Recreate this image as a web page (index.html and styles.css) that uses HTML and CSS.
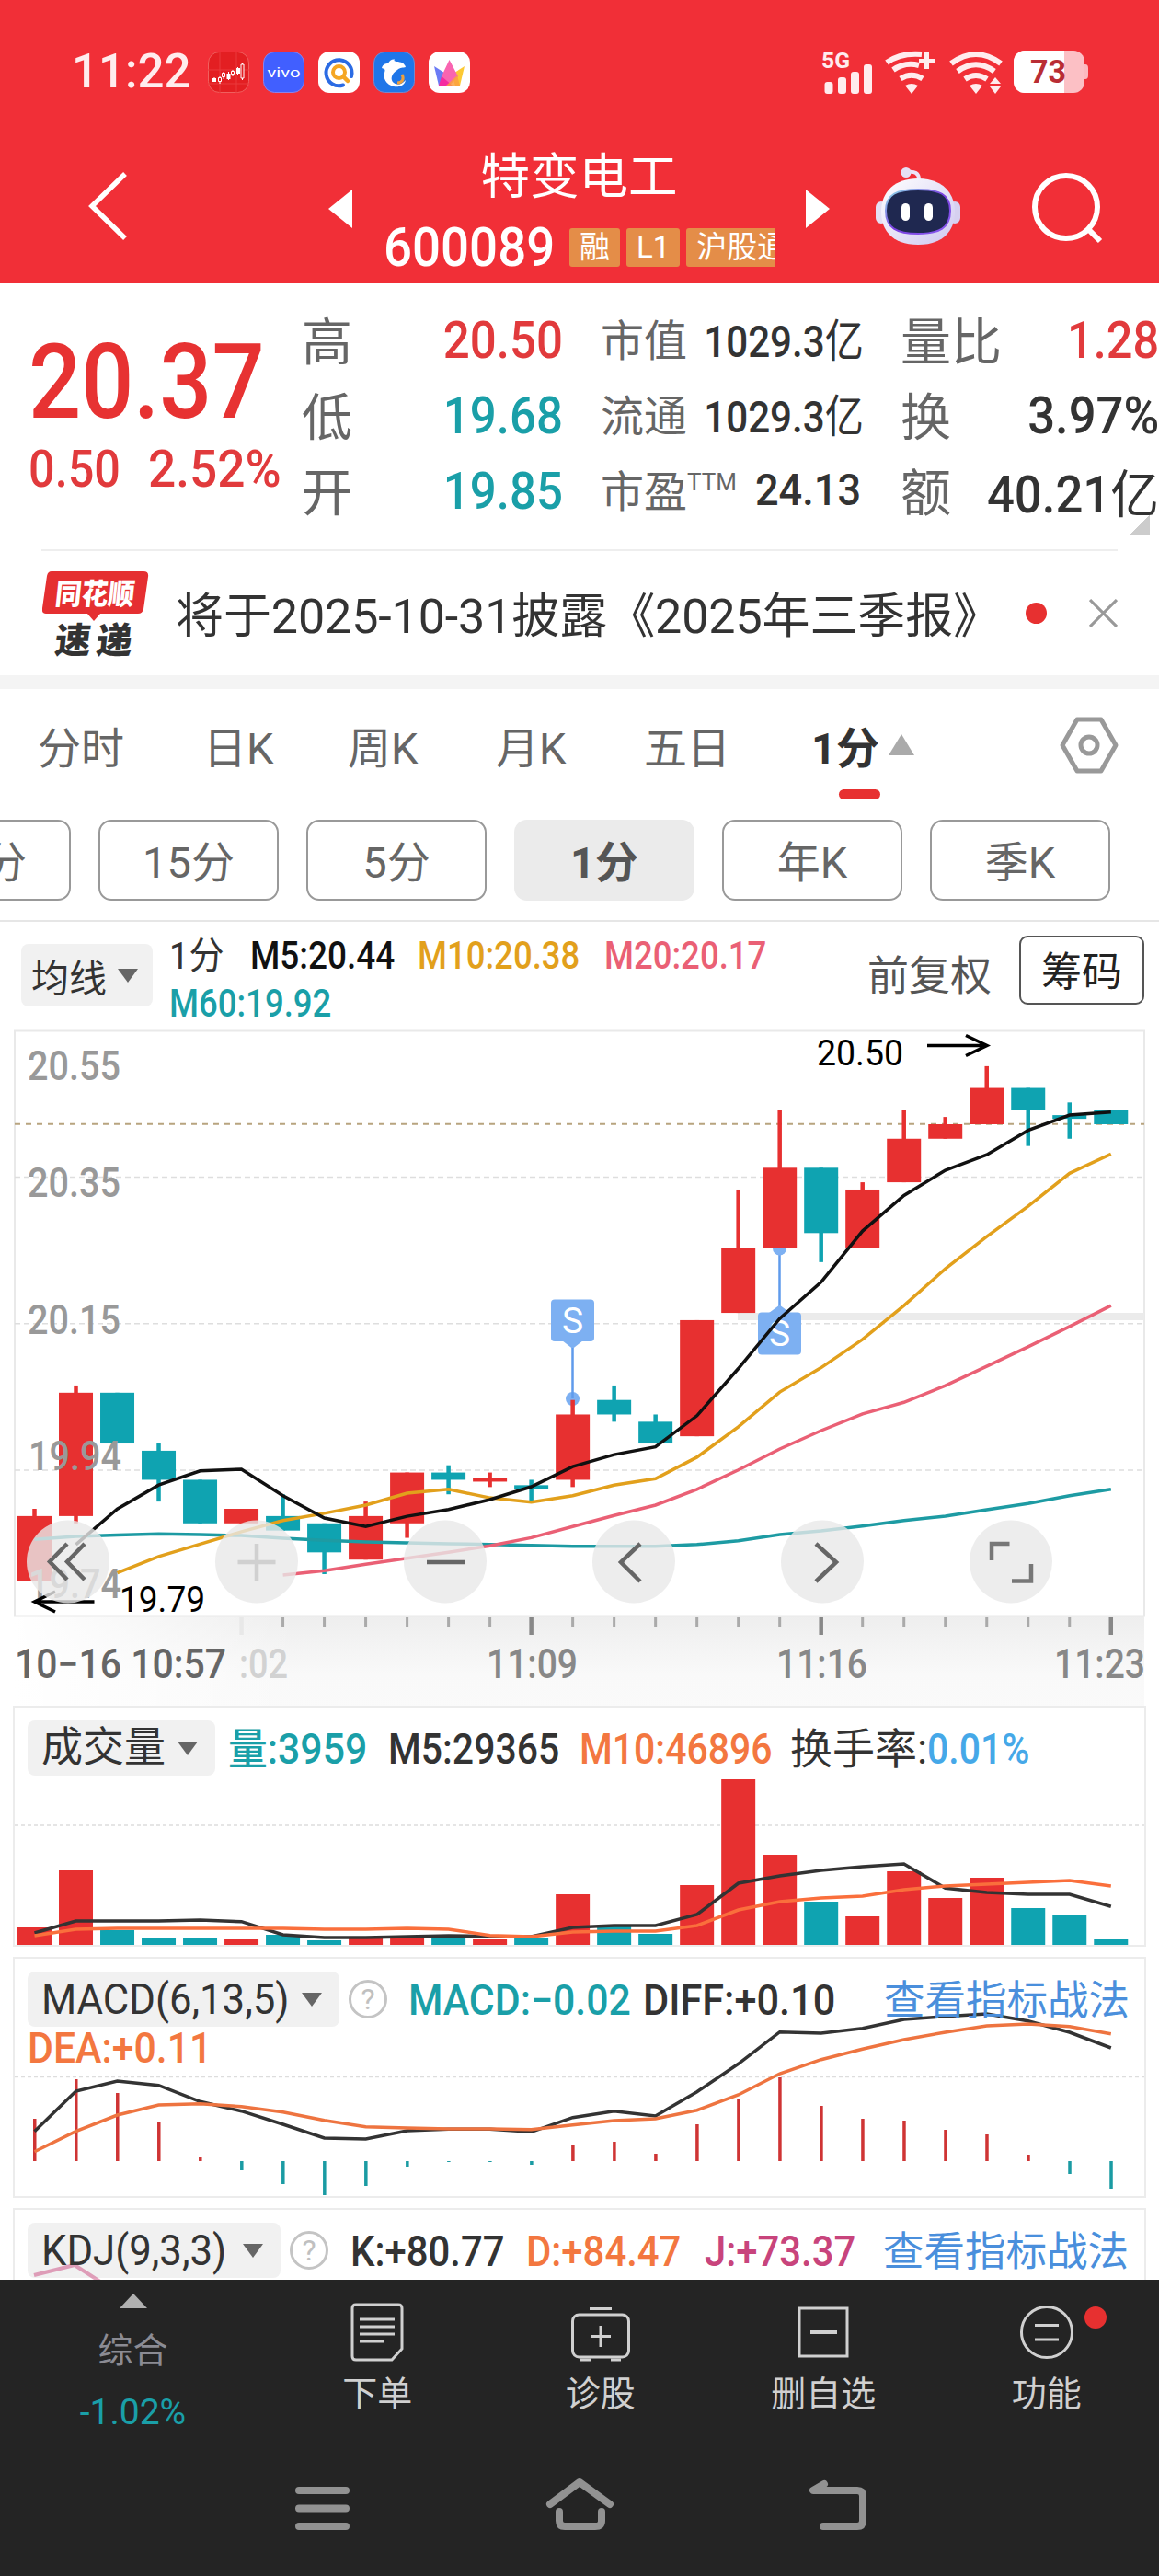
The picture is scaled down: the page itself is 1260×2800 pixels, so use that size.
FILE: index.html
```
<!DOCTYPE html>
<html lang="zh-CN">
<head>
    <meta charset="UTF-8">
    <meta name="viewport" content="width=device-width, initial-scale=1.0">
    <title>特变电工 600089</title>
    <link rel="stylesheet" href="styles.css">
</head>
<body>

<header class="top">
    <div class="status">
        <span class="clock">11:22</span>
        <div class="apps">
            <svg class="app" viewBox="0 0 45 45"><rect x=".5" y=".5" width="44" height="44" rx="12" fill="#e31f22" stroke="#f0605f"/><path d="M13 0V45M31 0V45M0 20H45M0 35H45" stroke="#ea3a3c" fill="none"/><path d="M7 28V33M13 27V35M17 22V30M22.500 22V31M27 20V27M32.500 17V25M37.500 12V31" stroke="#fff" stroke-width="1"/><path d="M5 29h4v4h-4zM20.500 24h4v6h-4zM31 18h4v6h-4z" fill="#fff"/><path d="M11.500 28.500h3v4h-3zM15.500 23.500h3v4h-3zM25.500 21.500h3v3h-3zM36 14h3v15h-3z" fill="#e31f22" stroke="#fff"/></svg>
            <svg class="app" viewBox="0 0 45 45"><rect x=".5" y=".5" width="44" height="44" rx="12" fill="#415fff" stroke="#8d82e8"/><text x="4.500" y="28" font-size="15" textLength="36" lengthAdjust="spacingAndGlyphs" fill="#fff">vivo</text></svg>
            <svg class="app" viewBox="0 0 45 45"><rect width="45" height="45" rx="12" fill="#fff"/><path d="M27 36.500A14 14 0 1 1 36 27" fill="none" stroke="#2b6be4" stroke-width="4" stroke-linecap="round"/><circle cx="22.500" cy="22.500" r="6.500" fill="none" stroke="#f5a623" stroke-width="4"/><path d="M27 27L32 32" stroke="#f5a623" stroke-width="4.500" stroke-linecap="round"/></svg>
            <svg class="app" viewBox="0 0 45 45"><rect x=".5" y=".5" width="44" height="44" rx="12" fill="#1f76e8" stroke="#7d86c8"/><path d="M9 18C10 14 13 13 16 13C17 10 20 8 23 8.500C22 10 22.500 10.500 25 11C30 11 34 13 35 17C32 18 29 17 26 20C19 24 18 31 22 34C26 37 31 36 35 31C34 37 28 39 22 38C14 36 10 29 12 23C13 20 13 19 9 18Z" fill="#fff"/><path d="M31 25C34 30 31 34 26 34" stroke="#f0a03c" stroke-width="3" fill="none"/></svg>
            <svg class="app" viewBox="0 0 45 45"><rect width="45" height="45" rx="12" fill="#fff"/><path d="M6 16L20 25L16 37H11Z" fill="#6b7bf5"/><path d="M39 16L25 25L29 37H34Z" fill="#fcc934"/><path d="M22.500 9L32 27L22.500 37L14 27Z" fill="#f964b0"/><path d="M14 27L26 37H11Z" fill="#f52ba0"/><path d="M31 26L34 37H19Z" fill="#fba040" opacity=".85"/></svg>
        </div>
        <svg class="signals" viewBox="890 50 300 56" fill="#ffecee">
            <text x="893" y="74" font-size="24" font-weight="700" textLength="31" lengthAdjust="spacingAndGlyphs">5G</text>
            <rect x="896.500" y="89" width="9" height="13" rx="3"/><rect x="911" y="84" width="9" height="18" rx="3"/><rect x="925" y="78" width="9" height="24" rx="3"/><rect x="939" y="70" width="9" height="32" rx="3"/>
            <g fill="none" stroke="#ffecee" stroke-width="6">
                <path d="M964 68Q979 57 1002 59M971 76Q984 67 999 71M979 85.500Q991 78 1003 85.500"/>
                <path d="M1034 69Q1061 49 1088 69M1041 77.500Q1061 63 1081 77.500M1049 86Q1061 78 1073 86"/>
            </g>
            <path d="M984 93Q991 89 998 93L991 102ZM1054 93Q1061 89 1068 93L1061 102ZM1076 91h12l-6-7zM1076 94h12l-6 8zM1005 57h5v7h7v4h-7v7h-5v-7h-6v-4h6z"/>
            <path d="M1178 70h2q3 0 3 4v8q0 4-3 4h-2z" fill="#fcb9bf"/>
            <rect x="1102" y="55" width="77" height="46" rx="12" fill="#fcc0c5"/>
            <path d="M1157 55h-43a12 12 0 0 0-12 12v22a12 12 0 0 0 12 12h43z" fill="#fff"/>
            <text x="1120" y="90" font-size="35" font-weight="700" fill="#b92d34" textLength="39" lengthAdjust="spacingAndGlyphs">73</text>
        </svg>
    </div>

    <div class="titlebar">
        <svg class="back" viewBox="0 0 44 76"><path d="M40 3L4 38L40 73" fill="none" stroke="#fff" stroke-width="5.500"/></svg>
        <svg class="prev" viewBox="0 0 26 42"><path d="M26 0V42L0 21Z" fill="#fff"/></svg>
        <div class="stock">
            <h1>特变电工</h1>
            <div class="code-row">
                <span class="code">600089</span>
                <span class="tag">融</span>
                <span class="tag">L1</span>
                <span class="tag tag-cut">沪股通</span>
            </div>
        </div>
        <svg class="next" viewBox="0 0 26 42"><path d="M0 0V42L26 21Z" fill="#fff"/></svg>
        <svg class="robot" viewBox="0 0 94 86">
            <defs>
                <linearGradient id="shell" x1="0" y1="0" x2="1" y2="1"><stop offset="0" stop-color="#fff"/><stop offset="1" stop-color="#cfc8f0"/></linearGradient>
                <linearGradient id="rim" x1="0" y1="0" x2="1" y2="1"><stop offset="0" stop-color="#8fe4e8"/><stop offset=".5" stop-color="#7a3fe0"/><stop offset="1" stop-color="#8a5cf0"/></linearGradient>
            </defs>
            <path d="M35 6Q48 4 48 14" fill="none" stroke="#ece4f8" stroke-width="4"/>
            <circle cx="34" cy="6.500" r="5.500" fill="#e6e0f4"/>
            <rect x="1" y="38" width="12" height="24" rx="6" fill="#e4e0f4"/><rect x="81" y="38" width="12" height="24" rx="6" fill="#d6d0f0"/>
            <path d="M47 13C72 13 87 27 87 49C87 72 72 85 47 85C22 85 7 72 7 49C7 27 22 13 47 13Z" fill="url(#shell)"/>
            <path d="M47 25C70 25 82 30 82 48C82 67 70 73 47 73C24 73 12 67 12 48C12 30 24 25 47 25Z" fill="#1f2850" stroke="url(#rim)" stroke-width="2"/>
            <rect x="29" y="40" width="9" height="19" rx="4.500" fill="#fff"/><rect x="54" y="40" width="9" height="19" rx="4.500" fill="#fff"/>
        </svg>
        <svg class="search" viewBox="0 0 78 78"><circle cx="37" cy="37" r="34" fill="none" stroke="#fff" stroke-width="6"/><path d="M61 61L74 74" stroke="#fff" stroke-width="6"/></svg>
    </div>
</header>

<section class="quote">
    <div class="price">
        <div class="last">20.37</div>
        <div class="change"><span>0.50</span><span class="pct">2.52%</span></div>
    </div>
    <dl class="col col-a">
        <div><dt>高</dt><dd class="up">20.50</dd></div>
        <div><dt>低</dt><dd class="down">19.68</dd></div>
        <div><dt>开</dt><dd class="down">19.85</dd></div>
    </dl>
    <dl class="col col-b">
        <div><dt>市值</dt><dd>1029.3<i>亿</i></dd></div>
        <div><dt>流通</dt><dd>1029.3<i>亿</i></dd></div>
        <div><dt>市盈<sup>TTM</sup></dt><dd class="pe">24.13</dd></div>
    </dl>
    <dl class="col col-c">
        <div><dt>量比</dt><dd class="ratio">1.28</dd></div>
        <div><dt>换</dt><dd>3.97%</dd></div>
        <div><dt>额</dt><dd>40.21<i>亿</i></dd></div>
    </dl>
    <i class="corner"></i>
</section>

<section class="news">
    <svg class="news-logo" viewBox="0 0 116 94">
        <path d="M10 1H110Q116 1 115 7L110 42Q109 47 104 47H63L56 55L49 47H4Q-1 47 0 41L5 6Q6 1 10 1Z" fill="#e52f31"/>
        <g transform="skewX(-6)" font-weight="900">
            <text x="17" y="37" font-size="32" fill="#fff" textLength="86" lengthAdjust="spacingAndGlyphs">同花顺</text>
            <text x="22" y="90" font-size="39" fill="#333" textLength="84">速递</text>
        </g>
    </svg>
    <p>将于2025-10-31披露《2025年三季报》</p>
    <i class="dot"></i>
    <svg class="close" viewBox="0 0 30 30"><path d="M1 1L29 29M29 1L1 29" stroke="#999" stroke-width="3"/></svg>
</section>

<nav class="tabs">
    <span>分时</span><span>日K</span><span>周K</span><span>月K</span><span>五日</span>
    <span class="active">1分<svg viewBox="0 0 28 23"><path d="M14 0L28 23H0Z" fill="#aaa"/></svg></span>
    <svg class="settings" viewBox="0 0 64 62"><path d="M19 3H45L61 31L45 59H19L3 31Z" fill="none" stroke="#999" stroke-width="5" stroke-linejoin="round"/><circle cx="32" cy="31" r="9" fill="none" stroke="#999" stroke-width="5"/></svg>
</nav>

<div class="periods">
    <span>30分</span><span>15分</span><span>5分</span><span class="active">1分</span><span>年K</span><span>季K</span>
</div>

<div class="ma-row">
    <span class="select">均线<i class="caret"></i></span>
    <div class="ma-values">
        <span>1分</span><span class="black">M5:20.44</span><span class="gold">M10:20.38</span><span class="pink">M20:20.17</span><span class="teal">M60:19.92</span>
    </div>
    <span class="adjust">前复权</span>
    <span class="chips">筹码</span>
</div>

<svg class="kline" id="kline" viewBox="0 0 1260 746"></svg>

<section class="panel volume">
    <svg id="volume" viewBox="0 0 1228 258"></svg>
    <div class="legend">
        <span class="select">成交量<i class="caret"></i></span>
        <span class="val teal v1">量:3959</span><span class="val v2">M5:29365</span><span class="val orange v3">M10:46896</span><span class="v4">换手率:<b>0.01%</b></span>
    </div>
</section>

<section class="panel macd">
    <svg id="macd" viewBox="0 0 1228 258"></svg>
    <div class="legend">
        <span class="select"><span class="name">MACD(6,13,5)</span><i class="caret"></i></span>
        <i class="help">?</i>
        <span class="val teal m1">MACD:−0.02</span><span class="val m2">DIFF:+0.10</span>
        <a>查看指标战法</a>
        <span class="val orange m3">DEA:+0.11</span>
    </div>
</section>

<section class="panel kdj">
    <div class="legend">
        <span class="select"><span class="name">KDJ(9,3,3)</span><i class="caret"></i></span>
        <i class="help">?</i>
        <span class="val k1">K:+80.77</span><span class="val orange k2">D:+84.47</span><span class="val magenta k3">J:+73.37</span>
        <a>查看指标战法</a>
    </div>
    <svg viewBox="0 0 1228 78"><path d="M21 71L65 60L96 80" fill="none" stroke="#cc4a80" stroke-width="4" opacity=".5"/></svg>
</section>

<footer>
    <div class="toolbar">
        <div class="index"><i></i><span>综合</span><b>-1.02%</b></div>
        <div class="tool">
            <svg viewBox="0 0 64 64"><path d="M9 2H55Q59 2 59 6V50L48 62H9Q5 62 5 58V6Q5 2 9 2Z"/><path d="M13 18H51M13 26H51M13 34H51M13 42H39"/></svg>
            <span>下单</span>
        </div>
        <div class="tool">
            <svg viewBox="0 0 64 64"><rect x="1.500" y="13" width="61" height="46" rx="7"/><path d="M20 6.500H44M10 62H21M43 62H54M32 25V48M21 36.500H43"/></svg>
            <span>诊股</span>
        </div>
        <div class="tool">
            <svg viewBox="0 0 64 64"><rect x="6" y="6" width="52" height="52"/><path d="M18 32H47" stroke-width="4"/></svg>
            <span>删自选</span>
        </div>
        <div class="tool">
            <svg viewBox="0 0 64 64"><circle cx="32" cy="32" r="27.500"/><path d="M19 24.500H45M19 40H45"/></svg>
            <span>功能</span>
            <i class="badge"></i>
        </div>
    </div>
    <svg class="sysnav" viewBox="0 0 1260 80" fill="none" stroke="#929292" stroke-width="8" stroke-linecap="round" stroke-linejoin="round">
        <path d="M325 21H376M325 40.500H376M325 60H376"/>
        <path d="M598 36L630 12L663 36M608 44V54Q608 60 614 60H647Q654 60 654 54V44" />
        <path d="M896 14L884 21H932Q938 21 938 27V54Q938 60 932 60H895"/>
    </svg>
</footer>

<script>
    const RED = '#e73030', GREEN = '#0fa3b1', STEP = 45.01;

    // [open, close, high, low] per minute, 10:57 - 11:23
    const candles = [
        [19.79, 19.88, 19.89, 19.79], [19.88, 20.05, 20.06, 19.87], [20.05, 19.98, 20.05, 19.98],
        [19.97, 19.93, 19.98, 19.90], [19.93, 19.87, 19.93, 19.87], [19.87, 19.89, 19.89, 19.87],
        [19.88, 19.86, 19.91, 19.86], [19.87, 19.83, 19.87, 19.80], [19.82, 19.88, 19.90, 19.82],
        [19.87, 19.94, 19.94, 19.85], [19.94, 19.93, 19.95, 19.91], [19.93, 19.93, 19.94, 19.92],
        [19.92, 19.92, 19.93, 19.90], [19.93, 20.02, 20.04, 19.92], [20.04, 20.02, 20.06, 20.01],
        [20.01, 19.98, 20.02, 19.98], [19.99, 20.15, 20.15, 19.99], [20.16, 20.25, 20.33, 20.16],
        [20.25, 20.36, 20.44, 20.25], [20.36, 20.27, 20.36, 20.23], [20.25, 20.33, 20.34, 20.25],
        [20.34, 20.40, 20.44, 20.34], [20.40, 20.42, 20.43, 20.40], [20.42, 20.47, 20.50, 20.42],
        [20.47, 20.44, 20.47, 20.39], [20.43, 20.43, 20.45, 20.40], [20.44, 20.42, 20.44, 20.42]
    ];
    const down = [2, 3, 4, 6, 7, 10, 12, 14, 15, 19, 24, 25, 26];
    const color = i => down.includes(i) ? GREEN : RED;

    const ma5 = [568.9, 530.2, 504.2, 488.8, 487, 515.8, 540, 549.3, 538.1, 530.7, 520, 506, 484.1, 471.1, 462.7, 428.8, 377.5, 323.1, 283.5, 228.1, 189.5, 162, 145.2, 118.7, 102, 98.7];
    const ma10 = [599.6, 581.9, 568.4, 554.9, 542.8, 534.9, 526, 513, 508.8, 518.1, 522.8, 515.8, 504.2, 497.2, 473.9, 440.9, 403.1, 376.6, 345.9, 309.1, 269.1, 234.2, 201.1, 165.3, 144.3];
    const ma20 = [601.9, 597.2, 590.3, 583.7, 577.2, 570.2, 561.4, 549.3, 537.2, 526, 508.8, 487.8, 465, 445, 426.9, 414.3, 396.1, 375.2, 353.8, 331.9, 309.1];
    const ma60 = [563.3, 560, 558.6, 557.2, 558.1, 559.1, 561.9, 564.2, 566, 567, 567.9, 568.8, 569.8, 570.7, 570.7, 570.7, 568.8, 564.7, 558.1, 554, 548.8, 542.8, 538.1, 531.1, 524.2, 515.8, 508.8];

    const volumes = [19, 81, 16, 8, 7, 6, 11, 5, 7, 8, 9, 6, 8, 55, 20, 12, 65, 180, 98, 47, 31, 80, 51, 73, 40, 32, 6];
    const vol5 = [13, 26, 26, 26, 27, 25.3, 11, 8, 8, 9, 10, 9.3, 9, 19, 21, 21, 33, 67, 75, 81, 85, 88, 61.7, 57, 55, 55, 41.7];
    const vol10 = [10, 17, 18, 18, 18, 18, 18, 17, 17, 18, 17, 10.3, 9, 14, 15, 15, 21, 38, 47, 51, 53, 60, 64, 66, 68, 70, 64];

    const hist = [46, 89, 74, 42, 4, -10, -25, -37, -27, -6, -1, -1, -4, 17, 21, 8, 40, 68, 91, 60, 46, 44, 34, 29, 7, -14, -30];
    const diff = [32.3, 76, 87, 82.3, 64.7, 54.3, 40, 25, 24, 33, 34.7, 34.7, 31.7, 47.3, 54.3, 49, 75.3, 105.7, 140.3, 139, 144.3, 154, 157.3, 160, 152.3, 140, 123];
    const dea = [10.3, 32.3, 50, 61, 62.3, 59.3, 53.3, 44.3, 37.3, 36, 35, 35, 34.3, 39.3, 44, 46, 55.3, 72, 95, 110.3, 121.7, 132, 140, 147, 149, 146.3, 138.3];

    function line(values, x0, stroke, width, y = v => v) {
        const pts = values.map((v, i) => (x0 + i * STEP).toFixed(1) + ',' + y(v).toFixed(1)).join(' ');
        return `<polyline points="${pts}" fill="none" stroke="${stroke}" stroke-width="${width}"/>`;
    }

    function rect(x, y, w, h, fill) {
        return `<rect x="${x}" y="${y}" width="${w}" height="${h}" fill="${fill}"/>`;
    }

    function label(x, y, text, width, size, fill, weight = 500) {
        return `<text x="${x}" y="${y}" font-size="${size}" font-weight="${weight}" fill="${fill}" textLength="${width}" lengthAdjust="spacingAndGlyphs">${text}</text>`;
    }

    function dash(y, x1, x2, stroke, pattern, width = 1.5) {
        return `<path d="M${x1} ${y}H${x2}" stroke="${stroke}" stroke-width="${width}" stroke-dasharray="${pattern}"/>`;
    }

    function drawKline() {
        const X0 = 37.5;
        const py = p => 48.9 + (20.50 - p) * 788.7;
        let s = `<defs>
            <linearGradient id="axisV" x1="0" y1="0" x2="0" y2="1"><stop offset="0" stop-color="#eee"/><stop offset=".6" stop-color="#f9f9f9"/><stop offset="1" stop-color="#fafafa"/></linearGradient>
            <linearGradient id="axisH"><stop offset="0" stop-color="#fff"/><stop offset=".25" stop-color="#fff" stop-opacity="0"/></linearGradient>
        </defs>`;
        s += '<rect x="16" y="647" width="1228" height="105" fill="url(#axisV)"/><rect x="16" y="647" width="1228" height="105" fill="url(#axisH)"/>';
        s += '<rect x="16" y="10.500" width="1228" height="636" fill="#fff" stroke="#e9e9e9" stroke-width="2"/>';
        s += [169.5, 328.7, 487.9].map(y => dash(y, 16, 1244, '#dedede', '6 4')).join('');
        s += rect(802, 317, 442, 8, '#ebebeb');
        s += dash(111.7, 16, 1244, '#b8a47f', '6 6', 2);

        // sell markers
        s += '<g fill="#7db0f2"><rect x="599" y="302.500" width="47" height="45.500" rx="4"/><path d="M611 347H634L622.500 356Z"/><circle cx="622.500" cy="410.500" r="7.500"/><path d="M622.500 355V410M847.500 310V248" stroke="#5f9bec" stroke-width="2.500"/>';
        s += '<circle cx="847.500" cy="247" r="7.500"/><rect x="824" y="316.500" width="47" height="46" rx="4"/><path d="M836 317H859L847.500 308.500Z"/></g>';
        s += '<g font-size="39" fill="#fff" text-anchor="middle"><text x="622.500" y="339">S</text><text x="847.500" y="353">S</text></g>';

        candles.forEach(([o, c, h, l], i) => {
            const x = X0 + i * STEP;
            const top = py(Math.max(o, c)), bottom = py(Math.min(o, c));
            if (h > l) s += rect(x - 2.25, py(h), 4.5, py(l) - py(h), color(i));
            s += o === c ? rect(x - 18.5, top - 2, 37, 4, color(i)) : rect(x - 18.5, top, 37, bottom - top, color(i));
        });

        s += label(30, 63.8, '20.55', 101, 44, '#999') + label(30, 191.3, '20.35', 101, 44, '#999') + label(30, 339.8, '20.15', 101, 44, '#999');
        s += label(31, 488.3, '19.94', 101, 44, '#999') + label(31, 627, '19.74', 101, 44, '#999');

        s += line(ma60, X0, '#1d9ba3', 3.5) + line(ma20, X0 + 6 * STEP, '#ea6075', 3.5);
        s += line(ma10, X0 + 2 * STEP, '#e2a01c', 3.5) + line(ma5, X0 + STEP, '#111', 3.5);

        s += '<path d="M1008 26.500H1072M1050 15.500L1073 26.500L1050 37.500M102.500 631H38M60 620L37.500 631L60 642" fill="none" stroke="#000" stroke-width="3.500"/>';
        s += label(888, 48.4, '20.50', 94, 38, '#000', 400) + label(130, 642, '19.79', 93, 38, '#000', 400);

        // floating controls
        const icons = [
            ['M73 568L54 587.500L73 607M92 568L73 587.500L92 607', '#666'],
            ['M258.500 588H299.500M279 568V608', '#d0d0d0'],
            ['M464 588H505', '#666'],
            ['M696 568L675 588L696 609', '#666'],
            ['M887 568L909 588L887 609', '#666'],
            ['M1097.500 568H1078V586M1121 590V608.500H1100', '#777']
        ];
        icons.forEach(([d, stroke], i) => {
            s += `<circle cx="${74 + i * 205}" cy="587.500" r="45" fill="rgba(232,232,232,.8)"/>`;
            s += `<path d="${d}" fill="none" stroke="${stroke}" stroke-width="4.500"/>`;
        });

        for (let i = 5; i < 27; i++) {
            const major = i % 7 === 5;
            const w = major ? 4.5 : 3;
            s += rect(X0 + i * STEP - w / 2, 648, w, major ? 19 : 11, i === 5 ? '#e8e8e8' : major ? '#888' : '#aaa');
        }
        s += label(16, 714, '10−16 10:57', 230, 44, '#666') + label(260, 714, ':02', 53, 44, '#d2d2d2');
        s += label(529, 714, '11:09', 99, 44, '#888') + label(844, 714, '11:16', 99, 44, '#888') + label(1146, 714, '11:23', 99, 44, '#888');
        document.getElementById('kline').innerHTML = s;
    }

    function drawVolume() {
        let s = dash(128, 0, 1228, '#ddd', '4 3');
        volumes.forEach((v, i) => s += rect(3 + i * STEP, 258 - v, 37, v, color(i)));
        s += line(vol5, 21.5, '#333', 3.5, v => 258 - v) + line(vol10, 21.5, '#fa6f3c', 3.5, v => 258 - v);
        document.getElementById('volume').innerHTML = s;
    }

    function drawMacd() {
        let s = dash(128.5, 0, 1228, '#ddd', '4 3');
        hist.forEach((v, i) => s += rect(20 + i * STEP, v > 0 ? 220 - v : 220, 3.5, Math.abs(v), v > 0 ? '#cf3434' : '#1a9ba3'));
        s += line(diff, 21.5, '#333', 3.5, v => 220 - v) + line(dea, 21.5, '#ee7440', 3.5, v => 220 - v);
        document.getElementById('macd').innerHTML = s;
    }

    drawKline();
    drawVolume();
    drawMacd();
</script>

</body>
</html>
```
FILE: styles.css
```
* {
    box-sizing: border-box;
}
body {
    margin: 0;
    width: 1260px;
    height: 2800px;
    overflow: hidden;
    background: #fff;
    color: #333;
    font-family: Roboto, "Noto Sans CJK SC", sans-serif;
    display: flex;
    flex-direction: column;
}
i {
    font-style: normal;
}
svg {
    display: block;
}
.top {
    height: 308px;
    background: #f12f37;
    color: #fff;
}
.status {
    display: flex;
    align-items: center;
    height: 156px;
    padding-left: 78px;
}
.clock {
    width: 148px;
    font-size: 51px;
    font-weight: 500;
    line-height: 56px;
    color: #ffecee;
}
.apps {
    display: flex;
    gap: 15px;
    flex: 1;
}
.app {
    width: 45px;
    height: 45px;
}
.signals {
    width: 300px;
    height: 56px;
    margin-right: 70px;
}
.titlebar {
    display: grid;
    grid-template-columns: 96px 261px 63px 422px 34px 75px 171px 138px;
    height: 152px;
}
.back {
    grid-column: 2;
    width: 44px;
    height: 76px;
    margin-top: 30px;
}
.prev {
    width: 26px;
    height: 42px;
    margin-top: 50px;
}
.next {
    grid-column: 6;
    width: 26px;
    height: 42px;
    margin-top: 50px;
}
.robot {
    width: 94px;
    height: 86px;
    margin-top: 25px;
}
.search {
    width: 78px;
    height: 78px;
    margin-top: 32px;
}
h1 {
    margin: 0;
    padding-top: 2px;
    font-size: 53.500px;
    font-weight: 400;
    line-height: 70px;
    text-align: center;
}
.stock {
    grid-column: 4;
    margin-left: -3px;
}
.code-row {
    display: flex;
    align-items: center;
    gap: 7px;
    height: 79px;
    margin-top: 1px;
    overflow: hidden;
}
.code {
    flex: none;
    width: 195px;
    font-size: 60px;
    font-weight: 500;
    transform: scaleX(.91);
    transform-origin: left;
}
.tag {
    flex: none;
    height: 42px;
    padding: 0 11px;
    border-radius: 3px;
    background: #e48d48;
    font-size: 33px;
    line-height: 41px;
}
.quote {
    display: grid;
    grid-template-columns: 328px 327px 324px 281px;
    position: relative;
    height: 291px;
    padding-top: 21px;
}
.quote::after {
    content: "";
    position: absolute;
    left: 45px;
    right: 45px;
    bottom: 0;
    height: 2px;
    background: #eee;
}
.price {
    padding-left: 31px;
    color: #e73232;
}
.last {
    margin-top: 25px;
    font-size: 113px;
    font-weight: 500;
    line-height: 124px;
    transform: scaleX(.89);
    transform-origin: left;
}
.change {
    display: flex;
    font-size: 56px;
    font-weight: 500;
    line-height: 70px;
    margin-top: -3px;
    color: #e13a3c;
}
.change span {
    width: 130px;
    transform: scaleX(.9);
    transform-origin: left;
}
.change .pct {
    transform: scaleX(.95);
}
.col {
    margin: 0;
    color: #333;
}
.col > div {
    display: flex;
    justify-content: space-between;
    align-items: center;
    height: 82px;
}
.col dt {
    margin-top: -7px;
    color: #666;
    font-size: 55px;
    white-space: nowrap;
}
.col dd {
    margin: 0;
    font-size: 56px;
    font-weight: 500;
    white-space: nowrap;
    transform: scaleX(.91);
    transform-origin: right;
}
.col dd i {
    font-weight: 400;
}
.col-a {
    padding-right: 43px;
}
.col-b {
    padding-right: 43px;
}
.col-b dt {
    margin-left: -2px;
    font-size: 47px;
}
.col-b dd {
    margin: -8px -3px 0 -20px;
    font-size: 49px;
    transform: scaleX(.86);
}
.col-b .pe {
    margin: -4px 0 0;
    transform: scaleX(.92);
}
.col-b sup {
    font-size: 26px;
    line-height: 0;
    vertical-align: 18px;
}
.col-c dd {
    transform: scaleX(.94);
}
.col-c .ratio {
    color: #e13a3c;
    transform: scaleX(.9);
}
.col-c dd:has(i) {
    margin-top: -4px;
}
.up {
    color: #e13a3c !important;
}
.down {
    color: #1a9fa8 !important;
}
.corner {
    position: absolute;
    right: 10px;
    bottom: 17px;
    width: 23px;
    height: 23px;
    background: linear-gradient(135deg, transparent 50%, #ccc 50%);
}
.news {
    display: flex;
    align-items: center;
    height: 150px;
    padding: 0 45px;
    border-bottom: 15px solid #f4f4f4;
}
.news-logo {
    flex: none;
    width: 116px;
    height: 94px;
    margin-left: 1px;
}
.news p {
    width: 925px;
    margin: 8px 0 0 29px;
    font-size: 52px;
    line-height: 76px;
    letter-spacing: -.1px;
    white-space: nowrap;
}
.dot {
    width: 23px;
    height: 23px;
    margin-right: 46px;
    border-radius: 50%;
    background: #e73030;
}
.close {
    width: 31px;
    height: 31px;
}
.tabs {
    display: flex;
    align-items: center;
    height: 125px;
    padding: 0 42px 4px 41px;
    font-size: 47px;
    color: #666;
}
.tabs > span:nth-child(1) { width: 180px; }
.tabs > span:nth-child(2) { width: 157px; }
.tabs > span:nth-child(3) { width: 161px; }
.tabs > span:nth-child(4) { width: 161px; }
.tabs > span:nth-child(5) { width: 182px; }
.tabs .active {
    position: relative;
    display: flex;
    align-items: center;
    gap: 10px;
    width: 270px;
    color: #333;
    font-weight: 700;
}
.tabs .active svg {
    width: 28px;
    height: 23px;
}
.tabs .active::after {
    content: "";
    position: absolute;
    left: 30px;
    top: 83px;
    width: 45px;
    height: 11px;
    border-radius: 6px;
    background: #e73030;
}
.settings {
    width: 64px;
    height: 62px;
}
.periods {
    display: flex;
    gap: 30px;
    height: 128px;
    margin-left: -119px;
    padding-top: 17px;
    border-bottom: 2px solid #e6e6e6;
}
.periods span {
    flex: none;
    width: 196px;
    height: 88px;
    border: 2px solid #999;
    border-radius: 14px;
    font-size: 47px;
    line-height: 90px;
    text-align: center;
    color: #666;
}
.periods .active {
    border-color: #ebebeb;
    background: #ebebeb;
    font-weight: 700;
    color: #555;
}
.ma-row {
    display: flex;
    height: 108px;
    padding-left: 23px;
}
.select {
    display: flex;
    align-items: center;
    border-radius: 8px;
    background: #f1f1f1;
    color: #333;
}
.caret {
    border: 11.500px solid transparent;
    border-top: 15px solid #666;
    border-bottom: 0;
}
.ma-row .select {
    gap: 12px;
    width: 143px;
    height: 68px;
    margin-top: 24px;
    padding-left: 11px;
    font-size: 41px;
}
.ma-values {
    display: grid;
    grid-template-columns: 88px 182px 203px 225px;
    width: 698px;
    height: 104px;
    margin: 11px 0 0 18px;
    font-size: 42px;
    font-weight: 500;
    line-height: 52px;
    white-space: nowrap;
}
.ma-values span {
    transform: scaleX(.87);
    transform-origin: left;
}
.ma-values span:first-child {
    font-size: 41px;
    font-weight: 400;
    transform: scaleX(.93);
}
.ma-values span:last-child {
    grid-column: 1 / 3;
}
.ma-values .black {
    color: #111;
    transform: scaleX(.88);
}
.gold { color: #e2a01c; }
.pink { color: #ea6075; }
.teal { color: #1a9fa8; }
.orange { color: #f37740; }
.magenta { color: #c8447c; }
.adjust {
    width: 165px;
    margin: 26px 0 0 61px;
    font-size: 45px;
    line-height: 68px;
    color: #555;
}
.chips {
    width: 136px;
    height: 75px;
    margin-top: 15px;
    border: 2px solid #555;
    border-radius: 9px;
    font-size: 44px;
    line-height: 77px;
    text-align: center;
    color: #222;
}
.kline {
    flex: none;
    width: 1260px;
    height: 746px;
}
.panel {
    display: grid;
    flex: none;
    width: 1228px;
    height: 258px;
    margin: 0 16px 15px;
    box-shadow: 0 0 0 2px #ececec;
}
.panel > * {
    grid-area: 1 / 1;
    width: 1228px;
}
.panel svg {
    height: 258px;
}
.legend {
    display: flex;
    flex-wrap: wrap;
    align-content: flex-start;
    padding: 14px 0 0 14px;
    font-size: 46px;
    font-weight: 500;
    line-height: 62px;
    white-space: nowrap;
}
.legend .select {
    justify-content: space-between;
    height: 60px;
    padding: 0 19px 0 15px;
}
.select .name {
    width: 240px;
    font-weight: 400;
    transform: scaleX(.95);
    transform-origin: left;
}
.kdj .select .name {
    width: 180px;
}
.val {
    transform: scaleX(.89);
    transform-origin: left;
}
.volume .select {
    width: 204px;
    font-size: 45px;
    font-weight: 400;
}
.v1 { width: 174px; margin-left: 14px; transform: scaleX(.93); }
.v2 { width: 208px; }
.v3 { width: 229px; }
.v4 { font-size: 46px; font-weight: 400; }
.legend b {
    display: inline-block;
    font-size: 46px;
    font-weight: 500;
    color: #45a8e8;
    transform: scaleX(.89);
    transform-origin: left;
}
.macd .select {
    width: 339px;
}
.kdj .select {
    width: 275px;
}
.help {
    width: 42px;
    height: 42px;
    margin: 9px 0 0 10px;
    border: 3px solid #c4c4c4;
    border-radius: 50%;
    font-size: 32px;
    font-weight: 400;
    line-height: 37px;
    text-align: center;
    color: #c0c0c0;
}
.m1 { width: 255px; margin-left: 23px; transform: scaleX(.93); }
.m2 { width: 262px; transform: scaleX(.94); }
.m3 { margin: -12px 0 0 0; transform: scaleX(.93); }
.k1 { width: 191px; margin-left: 24px; transform: scaleX(.91); }
.k2 { width: 194px; transform: scaleX(.91); }
.k3 { width: 194px; transform: scaleX(.91); }
.legend a {
    width: 270px;
    color: #4a8fdc;
    font-size: 44.500px;
    font-weight: 400;
    line-height: 64px;
}
.kdj {
    height: 76px;
    margin-bottom: 0;
}
.kdj svg {
    height: 78px;
}
footer {
    position: relative;
    flex: none;
    height: 322px;
    background: #242424;
}
.toolbar {
    display: flex;
    height: 208px;
}
.index {
    display: flex;
    flex-direction: column;
    align-items: center;
    width: 289px;
    padding-top: 15px;
    font-size: 38px;
    color: #8b8b93;
}
.index i {
    border: 15px solid transparent;
    border-bottom: 16px solid #b0b0b0;
    border-top: 0;
}
.index span {
    margin-top: 16px;
    line-height: 60px;
}
.index b {
    margin-top: 7px;
    font-size: 39px;
    font-weight: 400;
    line-height: 60px;
    color: #1a9fa8;
}
.tool {
    position: relative;
    width: 242.500px;
    padding-top: 25px;
    text-align: center;
    font-size: 38px;
    line-height: 60px;
    color: #d0d0d0;
}
.tool svg {
    width: 64px;
    height: 64px;
    margin: 0 auto 5px;
    fill: none;
    stroke: #d0d0d0;
    stroke-width: 3;
}
.badge {
    position: absolute;
    right: 56px;
    top: 29px;
    width: 24px;
    height: 24px;
    border-radius: 50%;
    background: #e73030;
}
.sysnav {
    width: 1260px;
    height: 80px;
}
```
